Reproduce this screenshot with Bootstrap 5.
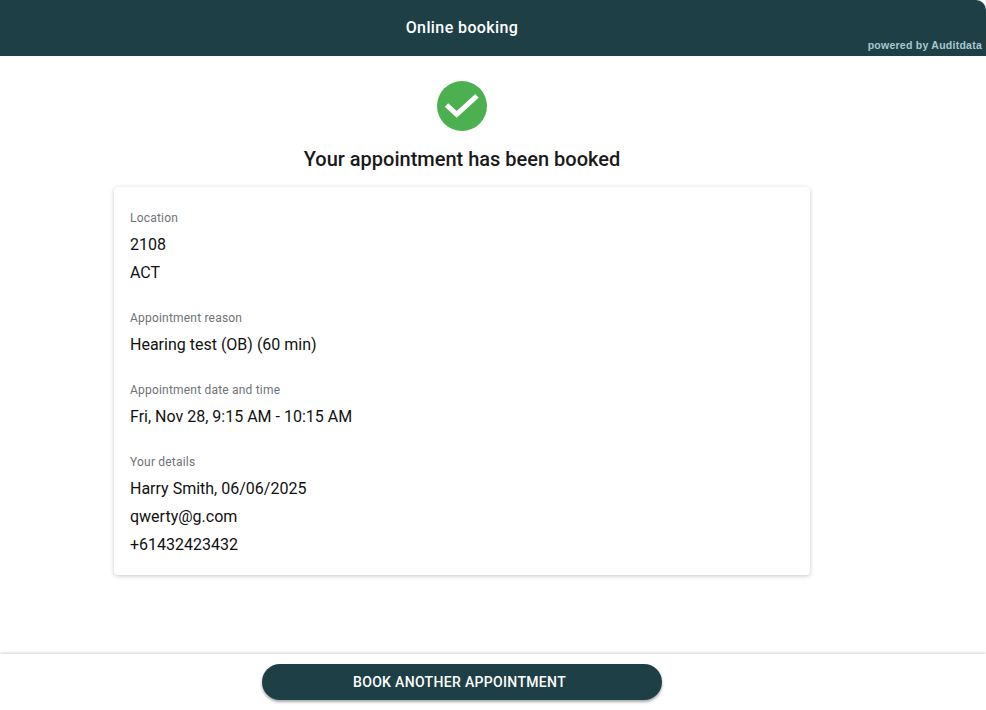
<!DOCTYPE html>
<html lang="en">
<head>
  <meta charset="UTF-8">
  <title>Online booking</title>
  <meta name="viewport" content="width=device-width, initial-scale=1">
  <link href="https://cdn.jsdelivr.net/npm/bootstrap@5.3.2/dist/css/bootstrap.min.css" rel="stylesheet">
  <style>
    html, body { height: 100%; }
    body { background: #fff; color: #1a1a1a; font-family: Roboto, sans-serif; overflow: hidden; }
    .page-wrap { height: 710px; }
    .top-bar { height: 56px; background: #1f3f46; border-top-right-radius: 10px; padding-right: 62px; }
    .top-title { font-size: 16px; font-weight: 500; color: #fff; letter-spacing: .4px; }
    .powered { right: 4px; bottom: 2px; font-family: "Liberation Sans", sans-serif; font-size: 10.5px; font-weight: 700; color: #a9c6d1; letter-spacing: .25px; }
    .main-area { padding-right: 62px; }
    .done-icon { width: 50px; height: 50px; margin-top: 25px; }
    .done-title { font-size: 20px; font-weight: 500; line-height: 28px; margin: 14px 0 14px; color: #1a1a1a; }
    .info-card { width: 696px; height: 388px; padding: 18px 16px; border: 0; border-radius: 4px; box-shadow: 0 1px 4px rgba(0,0,0,.22); }
    .info-group { margin-bottom: 18px; }
    .info-label { font-size: 12px; line-height: 26px; color: #6f7378; letter-spacing: .2px; }
    .info-value { font-size: 16px; font-weight: 400; line-height: 28px; color: #111; }
    .bottom-bar { height: 56px; box-shadow: 0 -1px 3px rgba(0,0,0,.18); padding-right: 62px; }
    .book-btn { width: 400px; height: 36px; border-radius: 18px; background: #1f3f46; color: #fff; font-size: 14px; font-weight: 500; letter-spacing: .33px; border: 0; box-shadow: 0 2px 3px rgba(0,0,0,.35); padding: 0 5px 0 0; }
    .book-btn:hover { background: #1f3f46; color: #fff; }
  </style>
</head>
<body>
  <div class="page-wrap d-flex flex-column">
    <header class="top-bar position-relative d-flex align-items-center justify-content-center">
      <span class="top-title">Online booking</span>
      <span class="powered position-absolute">powered by Auditdata</span>
    </header>

    <main class="main-area flex-grow-1 d-flex flex-column align-items-center">
      <svg class="done-icon" viewBox="0 0 50 50" aria-hidden="true">
        <circle cx="25" cy="25" r="25" fill="#4caf50"/>
        <path d="M9.5 24 L19.7 33.3 L40 14.8" fill="none" stroke="#fff" stroke-width="5"/>
      </svg>
      <h1 class="done-title">Your appointment has been booked</h1>

      <div class="card info-card">
        <div class="info-group">
          <div class="info-label">Location</div>
          <div class="info-value">2108</div>
          <div class="info-value">ACT</div>
        </div>
        <div class="info-group">
          <div class="info-label">Appointment reason</div>
          <div class="info-value">Hearing test (OB) (60 min)</div>
        </div>
        <div class="info-group">
          <div class="info-label">Appointment date and time</div>
          <div class="info-value">Fri, Nov 28, 9:15 AM - 10:15 AM</div>
        </div>
        <div class="info-group mb-0">
          <div class="info-label">Your details</div>
          <div class="info-value">Harry Smith, 06/06/2025</div>
          <div class="info-value">qwerty@g.com</div>
          <div class="info-value">+61432423432</div>
        </div>
      </div>
    </main>

    <footer class="bottom-bar d-flex align-items-center justify-content-center">
      <button type="button" class="btn book-btn">BOOK ANOTHER APPOINTMENT</button>
    </footer>
  </div>
</body>
</html>
